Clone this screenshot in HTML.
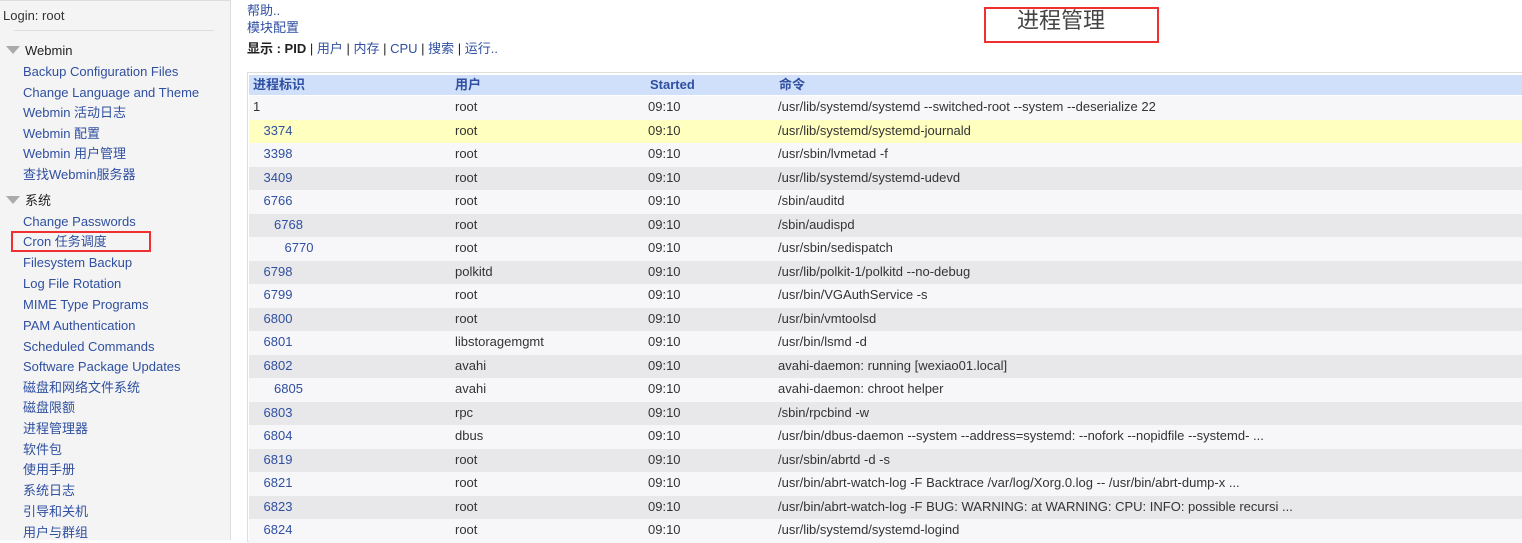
<!DOCTYPE html>
<html><head><meta charset="utf-8"><style>
*{margin:0;padding:0;box-sizing:border-box}
body{width:1522px;height:540px;overflow:hidden;background:#fff;font-family:"Liberation Sans","Noto Sans CJK SC",sans-serif;font-size:13px;line-height:16px;color:#333;position:relative}
#side{position:absolute;left:0;top:0;width:231px;height:540px;background:#f4f4f4;border-right:1px solid #ddd;border-top:1px solid #ddd}
.a{position:absolute;white-space:nowrap;line-height:16px}
.l{color:#2f4fa0}
.sl{position:absolute;left:23px;color:#2f4fa0;white-space:nowrap;line-height:16px;height:16px}
.tri{position:absolute;left:6px;width:0;height:0;border-left:7px solid transparent;border-right:7px solid transparent;border-top:8px solid #aaa}
.row{position:absolute;left:249px;right:0;height:23.5px}
.row span{position:absolute;top:3px;white-space:nowrap;line-height:16px;height:16px}
</style></head><body>
<div id="side">
<div class="a" style="left:3px;top:7px;color:#333">Login: root</div>
<div class="a" style="left:14px;top:29px;width:200px;border-top:1px solid #ddd"></div>
<div class="tri" style="top:45px"></div><div class="a" style="left:25px;top:42px;color:#222">Webmin</div>
<div class="sl" style="top:63px">Backup Configuration Files</div>
<div class="sl" style="top:84px">Change Language and Theme</div>
<div class="sl" style="top:104px">Webmin 活动日志</div>
<div class="sl" style="top:125px">Webmin 配置</div>
<div class="sl" style="top:145px">Webmin 用户管理</div>
<div class="sl" style="top:166px">查找Webmin服务器</div>
<div class="tri" style="top:195px"></div><div class="a" style="left:25px;top:192px;color:#222">系统</div>
<div class="sl" style="top:213px">Change Passwords</div>
<div class="sl" style="top:233px">Cron 任务调度</div>
<div class="a" style="left:11px;top:230px;width:140px;height:21px;border:2px solid #f03030"></div>
<div class="sl" style="top:254px">Filesystem Backup</div>
<div class="sl" style="top:275px">Log File Rotation</div>
<div class="sl" style="top:296px">MIME Type Programs</div>
<div class="sl" style="top:317px">PAM Authentication</div>
<div class="sl" style="top:338px">Scheduled Commands</div>
<div class="sl" style="top:358px">Software Package Updates</div>
<div class="sl" style="top:379px">磁盘和网络文件系统</div>
<div class="sl" style="top:399px">磁盘限额</div>
<div class="sl" style="top:420px">进程管理器</div>
<div class="sl" style="top:441px">软件包</div>
<div class="sl" style="top:461px">使用手册</div>
<div class="sl" style="top:482px">系统日志</div>
<div class="sl" style="top:503px">引导和关机</div>
<div class="sl" style="top:524px">用户与群组</div>
</div>
<div class="a l" style="left:247px;top:3px">帮助..</div>
<div class="a l" style="left:247px;top:20px">模块配置</div>
<div class="a" style="left:247px;top:41px;color:#222"><b>显示 : PID</b> | <span class="l">用户</span> | <span class="l">内存</span> | <span class="l">CPU</span> | <span class="l">搜索</span> | <span class="l">运行..</span></div>
<div class="a" style="left:984px;top:7px;width:175px;height:36px;border:2px solid #f03030"></div>
<div class="a" style="left:1017px;top:8px;font-size:22px;line-height:26px;color:#444">进程管理</div>
<div class="a" style="left:247px;top:72px;right:0;height:470px;border:1px solid #ddd;border-right:none"></div>
<div class="row" style="top:75px;height:20px;background:#d0e0fa;font-weight:bold;color:#2f4fa0"><span style="left:4px;top:2px">进程标识</span><span style="left:206px;top:2px">用户</span><span style="left:401px;top:2px">Started</span><span style="left:530px;top:2px">命令</span></div>
<div id="rows"></div>
<script>
var d=[[0,"1","root","/usr/lib/systemd/systemd --switched-root --system --deserialize 22"],
[1,"3374","root","/usr/lib/systemd/systemd-journald"],
[1,"3398","root","/usr/sbin/lvmetad -f"],
[1,"3409","root","/usr/lib/systemd/systemd-udevd"],
[1,"6766","root","/sbin/auditd"],
[2,"6768","root","/sbin/audispd"],
[3,"6770","root","/usr/sbin/sedispatch"],
[1,"6798","polkitd","/usr/lib/polkit-1/polkitd --no-debug"],
[1,"6799","root","/usr/bin/VGAuthService -s"],
[1,"6800","root","/usr/bin/vmtoolsd"],
[1,"6801","libstoragemgmt","/usr/bin/lsmd -d"],
[1,"6802","avahi","avahi-daemon: running [wexiao01.local]"],
[2,"6805","avahi","avahi-daemon: chroot helper"],
[1,"6803","rpc","/sbin/rpcbind -w"],
[1,"6804","dbus","/usr/bin/dbus-daemon --system --address=systemd: --nofork --nopidfile --systemd- ..."],
[1,"6819","root","/usr/sbin/abrtd -d -s"],
[1,"6821","root","/usr/bin/abrt-watch-log -F Backtrace /var/log/Xorg.0.log -- /usr/bin/abrt-dump-x ..."],
[1,"6823","root","/usr/bin/abrt-watch-log -F BUG: WARNING: at WARNING: CPU: INFO: possible recursi ..."],
[1,"6824","root","/usr/lib/systemd/systemd-logind"]];
var h="";
d.forEach(function(r,i){var bg=i==1?"#ffffc0":(i%2?"#e8e8ea":"#f7f7f9");
h+='<div class="row" style="top:'+(96+23.5*i)+'px;background:'+bg+'"><span style="left:'+(4+r[0]*10.5)+'px;color:'+(i==0?"#333":"#2f4fa0")+'">'+r[1]+'</span><span style="left:206px">'+r[2]+'</span><span style="left:399px">09:10</span><span style="left:529px">'+r[3]+'</span></div>';});
document.getElementById("rows").innerHTML=h;
</script>
</body></html>
